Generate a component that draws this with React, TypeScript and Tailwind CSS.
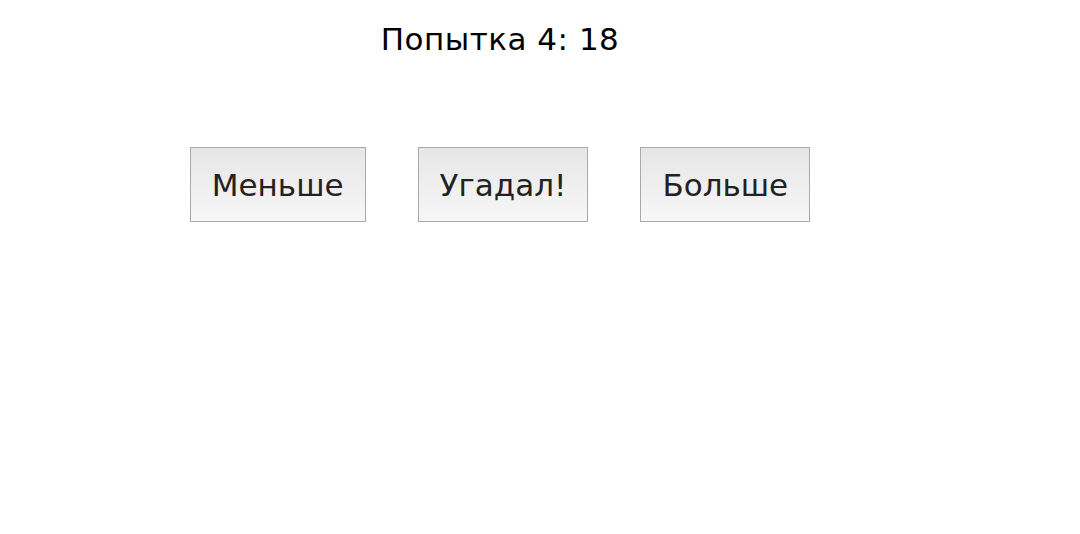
import React, { useState } from 'react';

const choices = ['Меньше', 'Угадал!', 'Больше'];

const GuessButton: React.FC<{ label: string; onClick?: () => void }> = ({ label, onClick }) => (
  <button
    onClick={onClick}
    className="h-[75px] px-[21px] pt-[2px] border border-[#a9a9a9] bg-gradient-to-b from-[#e6e6e6] to-[#f7f7f7] text-[31px] text-[#222] leading-none cursor-pointer"
  >
    {label}
  </button>
);

export default function App() {
  const [attempt] = useState(4);
  const [guess] = useState(18);

  return (
    <div className="min-h-[534px] w-full bg-white font-['DejaVu_Sans',sans-serif]">
      <div className="w-[1000px] flex flex-col items-center">
        <h1 className="mt-[21px] text-[31px] leading-[36px] tracking-[0.5px] text-black">
          Попытка {attempt}: {guess}
        </h1>
        <div className="mt-[90px] flex gap-[52px]">
          {choices.map((c) => (
            <GuessButton key={c} label={c} />
          ))}
        </div>
      </div>
    </div>
  );
}
